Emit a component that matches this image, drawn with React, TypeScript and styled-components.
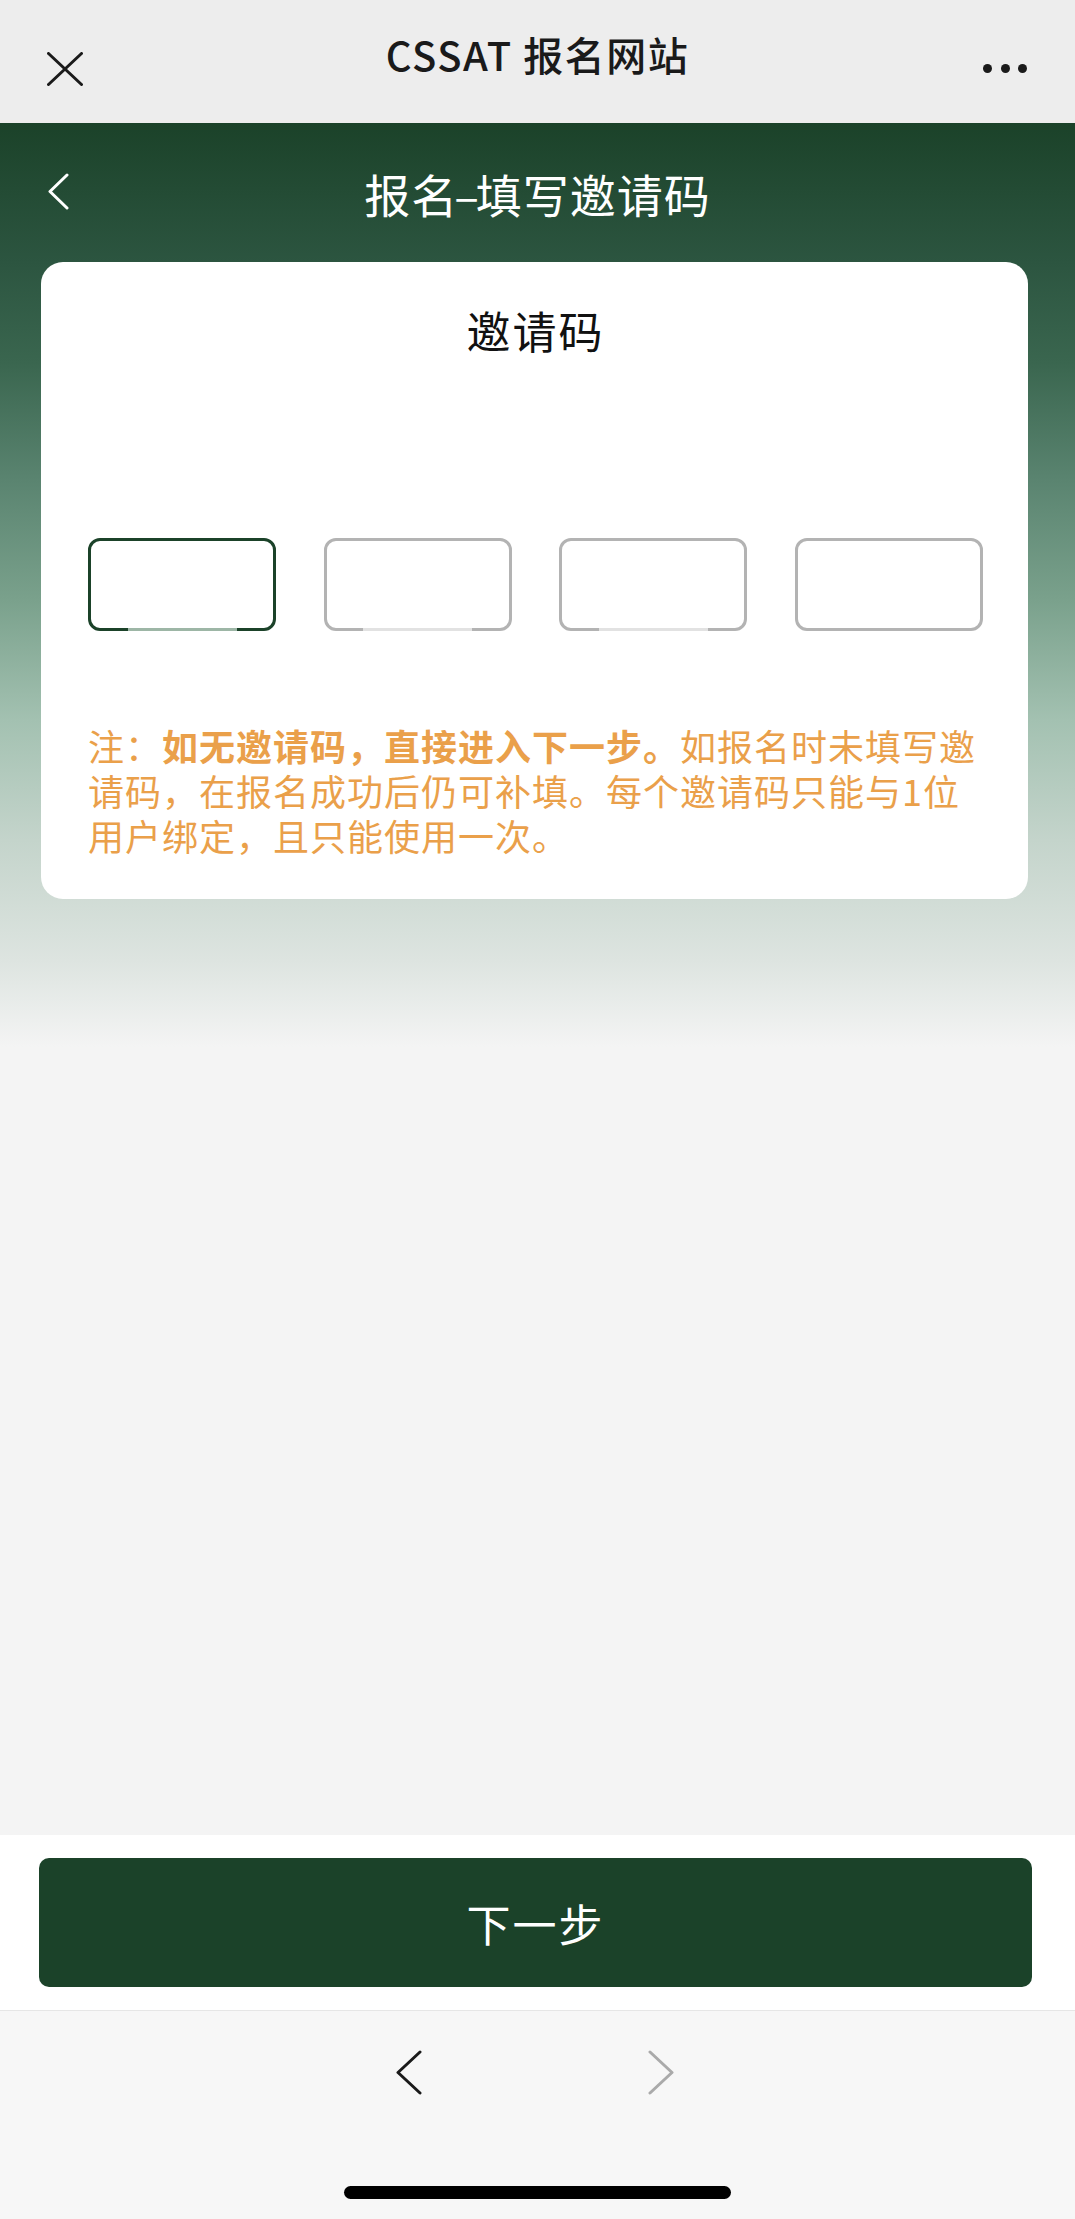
import React from "react";
import styled, { createGlobalStyle } from "styled-components";

const GlobalStyle = createGlobalStyle`
  html, body { margin: 0; padding: 0; background: #f4f4f4; }
  body { font-family: "Noto Sans CJK SC", "Noto Sans", sans-serif; }
  * { box-sizing: border-box; }
`;

const Page = styled.div`
  width: 1075px;
  height: 2219px;
  display: flex;
  flex-direction: column;
  overflow: hidden;
`;

const TopBar = styled.header`
  height: 123px;
  flex: none;
  background: #ededed;
  display: grid;
  grid-template-columns: 1fr auto 1fr;
  align-items: start;
`;

const CloseButton = styled.div`
  justify-self: start;
  margin: 52px 0 0 47px;
  width: 36px;
  height: 34px;
  display: flex;
`;

const TopTitle = styled.h1`
  margin: 27px 0 0;
  font-size: 40px;
  line-height: 54px;
  font-weight: 500;
  letter-spacing: 1.5px;
  color: #1a1a1a;
`;

const MoreButton = styled.div`
  justify-self: end;
  margin: 63.5px 48px 0 0;
  display: flex;
  gap: 8.5px;
`;

const Dot = styled.span`
  width: 9px;
  height: 9px;
  border-radius: 50%;
  background: #1a1a1a;
`;

const Main = styled.main`
  flex: 1;
  background: linear-gradient(
    180deg,
    #1b4229 0px,
    #2c5540 139px,
    #3a664f 240px,
    #5a8470 357px,
    #7aa18c 477px,
    #a3c1b1 597px,
    #c4d4cb 717px,
    #dde4e0 837px,
    #f4f4f4 924px,
    #f4f4f4 100%
  );
`;

const NavBar = styled.nav`
  height: 139px;
  display: grid;
  grid-template-columns: 1fr auto 1fr;
  align-items: center;
`;

const BackButton = styled.div`
  justify-self: start;
  margin-left: 48px;
  margin-top: -2px;
  width: 22px;
  height: 37px;
  display: flex;
`;

const NavTitle = styled.h2`
  margin: 0;
  font-size: 46px;
  line-height: 60px;
  font-weight: 400;
  letter-spacing: 1px;
  color: #ffffff;
`;

const Dash = styled.span`
  display: inline-block;
  margin: 0 -4px;
`;

const Card = styled.section`
  margin-left: 41px;
  width: 987px;
  background: #ffffff;
  border-radius: 22px;
  padding: 44px 45px 41px 47px;
`;

const CardTitle = styled.h3`
  margin: 0;
  text-align: center;
  font-size: 44px;
  line-height: 48px;
  font-weight: 400;
  letter-spacing: 2px;
  color: #111111;
`;

const CodeRow = styled.div`
  margin-top: 184px;
  display: flex;
  justify-content: space-between;
`;

const CodeBox = styled.div<{ $active?: boolean }>`
  width: 188px;
  height: 93px;
  border: 3px solid ${(p) => (p.$active ? "#1b4229" : "#b3b3b3")};
  border-radius: 12px;
  background: #fff;
  display: flex;
  justify-content: center;
  align-items: flex-end;
`;

const Underline = styled.div<{ $color: string }>`
  width: 109px;
  height: 3px;
  margin-bottom: -3px;
  background: ${(p) => p.$color};
`;

const Note = styled.p`
  margin: 92px 0 0;
  font-size: 36px;
  line-height: 45px;
  letter-spacing: 1px;
  color: #eaa04a;
`;

const Strong = styled.b`
  font-weight: 700;
`;

const BottomBar = styled.div`
  flex: none;
  background: #ffffff;
  padding: 23px 43px 23px 39px;
  border-bottom: 1px solid #e6e6e6;
`;

const NextButton = styled.button`
  width: 100%;
  height: 129px;
  border: none;
  border-radius: 10px;
  background: #1b4229;
  color: #ffffff;
  font-family: inherit;
  font-size: 44px;
  letter-spacing: 2px;
  font-weight: 400;
  padding: 0;
`;

const Toolbar = styled.div`
  flex: none;
  height: 208px;
  background: #f7f7f7;
  display: flex;
  flex-direction: column;
  align-items: center;
`;

const ArrowRow = styled.div`
  margin-top: 39px;
  margin-left: -6px;
  display: flex;
  gap: 226px;
`;

const ArrowIcon = styled.div`
  width: 26px;
  height: 45px;
  display: flex;
`;

const HomeIndicator = styled.div`
  margin-top: auto;
  margin-bottom: 20px;
  margin-left: -1px;
  width: 387px;
  height: 13px;
  border-radius: 7px;
  background: #000000;
`;

export default function App() {
  const boxes: { active?: boolean; hint?: string }[] = [
    { active: true, hint: "#9db6a6" },
    { hint: "#e2e2e2" },
    { hint: "#e2e2e2" },
    {},
  ];
  return (
    <>
      <GlobalStyle />
      <Page>
        <TopBar>
          <CloseButton>
            <svg width="36" height="34" viewBox="0 0 36 34">
              <path
                d="M1.5 1.5 L34.5 32.5 M34.5 1.5 L1.5 32.5"
                stroke="#1a1a1a"
                strokeWidth="3"
                strokeLinecap="round"
                fill="none"
              />
            </svg>
          </CloseButton>
          <TopTitle>CSSAT 报名网站</TopTitle>
          <MoreButton>
            <Dot />
            <Dot />
            <Dot />
          </MoreButton>
        </TopBar>
        <Main>
          <NavBar>
            <BackButton>
              <svg width="22" height="37" viewBox="0 0 22 37">
                <polyline
                  points="19,2 2,18.5 19,35"
                  stroke="#ffffff"
                  strokeWidth="3"
                  strokeLinecap="round"
                  strokeLinejoin="round"
                  fill="none"
                />
              </svg>
            </BackButton>
            <NavTitle>
              报名<Dash>–</Dash>填写邀请码
            </NavTitle>
            <span />
          </NavBar>
          <Card>
            <CardTitle>邀请码</CardTitle>
            <CodeRow>
              {boxes.map((b, i) => (
                <CodeBox key={i} $active={b.active}>
                  {b.hint && <Underline $color={b.hint} />}
                </CodeBox>
              ))}
            </CodeRow>
            <Note>
              注：<Strong>如无邀请码，直接进入下一步。</Strong>
              如报名时未填写邀请码，在报名成功后仍可补填。每个邀请码只能与1位用户绑定，且只能使用一次。
            </Note>
          </Card>
        </Main>
        <BottomBar>
          <NextButton>下一步</NextButton>
        </BottomBar>
        <Toolbar>
          <ArrowRow>
            <ArrowIcon>
              <svg width="26" height="45" viewBox="0 0 26 45">
                <polyline
                  points="24,2 2,22.5 24,43"
                  stroke="#1a1a1a"
                  strokeWidth="3"
                  strokeLinecap="round"
                  strokeLinejoin="round"
                  fill="none"
                />
              </svg>
            </ArrowIcon>
            <ArrowIcon>
              <svg width="26" height="45" viewBox="0 0 26 45">
                <polyline
                  points="2,2 24,22.5 2,43"
                  stroke="#aaaaaa"
                  strokeWidth="3"
                  strokeLinecap="round"
                  strokeLinejoin="round"
                  fill="none"
                />
              </svg>
            </ArrowIcon>
          </ArrowRow>
          <HomeIndicator />
        </Toolbar>
      </Page>
    </>
  );
}
